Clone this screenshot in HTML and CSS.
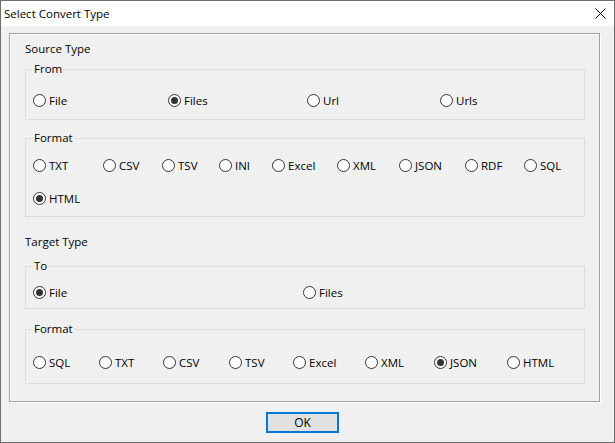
FILE: index.html
```html
<!DOCTYPE html>
<html lang="en">
<head>
    <meta charset="UTF-8">
    <title>Select Convert Type</title>
    <link rel="stylesheet" href="styles.css">
</head>
<body>
    <div class="window">
        <div class="titlebar">
            <span class="title">Select Convert Type</span>
            <svg class="close" width="11" height="11" viewBox="0 0 11 11">
                <path d="M0.5 0.5 L10.5 10.5 M10.5 0.5 L0.5 10.5" stroke="#000" stroke-width="1" fill="none"/>
            </svg>
        </div>
        <div class="client">
            <div class="panel">
                <div class="section-label">Source Type</div>

                <fieldset class="group from-group">
                    <legend>From</legend>
                    <div class="options from-options">
                        <label class="opt"><input type="radio" name="from">File</label>
                        <label class="opt"><input type="radio" name="from" checked>Files</label>
                        <label class="opt"><input type="radio" name="from">Url</label>
                        <label class="opt"><input type="radio" name="from">Urls</label>
                    </div>
                </fieldset>

                <fieldset class="group source-format">
                    <legend>Format</legend>
                    <div class="options source-options">
                        <label class="opt"><input type="radio" name="srcfmt">TXT</label>
                        <label class="opt"><input type="radio" name="srcfmt">CSV</label>
                        <label class="opt"><input type="radio" name="srcfmt">TSV</label>
                        <label class="opt"><input type="radio" name="srcfmt">INI</label>
                        <label class="opt"><input type="radio" name="srcfmt">Excel</label>
                        <label class="opt"><input type="radio" name="srcfmt">XML</label>
                        <label class="opt"><input type="radio" name="srcfmt">JSON</label>
                        <label class="opt"><input type="radio" name="srcfmt">RDF</label>
                        <label class="opt"><input type="radio" name="srcfmt">SQL</label>
                        <label class="opt"><input type="radio" name="srcfmt" checked>HTML</label>
                    </div>
                </fieldset>

                <div class="section-label target-label">Target Type</div>

                <fieldset class="group to-group">
                    <legend>To</legend>
                    <div class="options to-options">
                        <label class="opt"><input type="radio" name="to" checked>File</label>
                        <label class="opt"><input type="radio" name="to">Files</label>
                    </div>
                </fieldset>

                <fieldset class="group target-format">
                    <legend>Format</legend>
                    <div class="options target-options">
                        <label class="opt"><input type="radio" name="dstfmt">SQL</label>
                        <label class="opt"><input type="radio" name="dstfmt">TXT</label>
                        <label class="opt"><input type="radio" name="dstfmt">CSV</label>
                        <label class="opt"><input type="radio" name="dstfmt">TSV</label>
                        <label class="opt"><input type="radio" name="dstfmt">Excel</label>
                        <label class="opt"><input type="radio" name="dstfmt">XML</label>
                        <label class="opt"><input type="radio" name="dstfmt" checked>JSON</label>
                        <label class="opt"><input type="radio" name="dstfmt">HTML</label>
                    </div>
                </fieldset>
            </div>
            <button class="ok-button">OK</button>
        </div>
    </div>
</body>
</html>
```

FILE: styles.css
```css
* {
    box-sizing: border-box;
}
body {
    margin: 0;
    font-family: "Segoe UI", "Open Sans", "Noto Sans", sans-serif;
    font-size: 11.5px;
    color: #000;
    background: #f0f0f0;
}
.window {
    width: 615px;
    height: 443px;
    border: 1px solid #6e6e6e;
    background: #f0f0f0;
    display: flex;
    flex-direction: column;
}
.titlebar {
    height: 25px;
    background: #fff;
    display: flex;
    align-items: center;
    justify-content: space-between;
    padding: 0 8px 0 3px;
}
.client {
    flex: 1;
    padding: 7px 0 0 8px;
}
.panel {
    width: 591px;
    height: 369px;
    border: 1px solid #a0a0a0;
    box-shadow: 1px 1px 0 #fff, inset 1px 1px 0 #fff;
    padding: 7px 14px 0 15px;
}
.section-label {
    line-height: 16px;
}
.target-label {
    margin-top: 17px;
}

/* group boxes */
.group {
    margin: 0;
    min-width: 0;
    border: 1px solid #dcdcdc;
    padding: 0 7px;
}
.group legend {
    padding: 0 1px 0 2px;
    margin-left: -1px;
    line-height: 16px;
}
.from-group {
    margin-top: 4px;
    padding-top: 15px;
    padding-bottom: 11px;
}
.source-format {
    margin-top: 10px;
    padding-top: 11px;
    padding-bottom: 10px;
}
.to-group {
    margin-top: 8px;
    padding-top: 10px;
    padding-bottom: 8px;
}
.target-format {
    margin-top: 12px;
    padding-top: 17px;
    padding-bottom: 13px;
}

/* radio rows */
.options {
    display: grid;
    row-gap: 17px;
}
.from-options {
    grid-template-columns: 135px 139px 133px auto;
}
.source-options {
    grid-template-columns: 70px 59px 57px 53px 65px 62px 66px 59px auto;
}
.to-options {
    grid-template-columns: 270px auto;
}
.target-options {
    grid-template-columns: 66px 64px 66px 64px 72px 69px 73px auto;
}
.opt {
    display: flex;
    align-items: center;
    gap: 3px;
    height: 16px;
    white-space: nowrap;
}
.opt input {
    appearance: none;
    -webkit-appearance: none;
    margin: 0;
    width: 13px;
    height: 13px;
    border: 1px solid #333;
    border-radius: 50%;
    background: #fff;
    display: grid;
    place-items: center;
    flex: none;
}
.opt input:checked::before {
    content: "";
    width: 7px;
    height: 7px;
    border-radius: 50%;
    background: #333;
}

.ok-button {
    display: block;
    margin: 10px 0 0 257px;
    width: 73px;
    height: 21px;
    padding: 0;
    border: 2px solid #0078d7;
    background: #e1e1e1;
    font-family: inherit;
    font-size: 12px;
    color: #000;
}
```
